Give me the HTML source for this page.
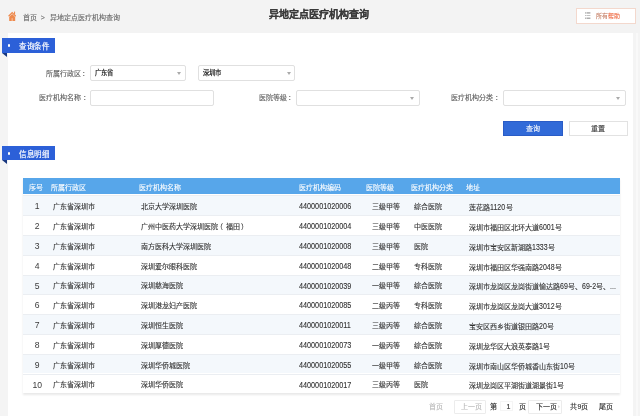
<!DOCTYPE html>
<html lang="zh-CN"><head><meta charset="utf-8">
<style>
*{margin:0;padding:0;box-sizing:border-box}
html,body{width:640px;height:416px;overflow:hidden;background:#f4f4f4;font-family:"Liberation Sans",sans-serif;color:#333;-webkit-text-stroke-width:0.1px}
.a{position:absolute;white-space:nowrap;line-height:1}
#hdr{position:absolute;left:0;top:0;width:640px;height:33px;background:#f3f3f3}
#panel{position:absolute;left:7.5px;top:33px;width:625.5px;height:383px;background:#fff}
.tab{position:absolute;left:2.3px;width:52.5px;height:14.5px;background:#2c60d8;color:#fff;font-size:15px}
.tab .dot{position:absolute;left:5.3px;top:6.3px;width:2.7px;height:2.7px;border-radius:50%;background:#fff}
.tab .t{position:absolute;left:16.9px;top:3.9px;-webkit-text-stroke-width:0.35px;line-height:1;white-space:nowrap;transform:scale(0.5);transform-origin:0 0}
.fold{position:absolute;left:2.3px;width:0;height:0;border-top:4.8px solid #17377f;border-left:5.2px solid transparent}
.lbl{position:absolute;font-size:7px;color:#5a5a5a;line-height:1}
.col{position:relative;left:1.9px}
.inp{position:absolute;height:15.5px;border:1px solid #e0e0e0;border-radius:2px;background:#fff}
.arr{position:absolute;width:0;height:0;border-top:3px solid #aaa;border-left:2px solid transparent;border-right:2px solid transparent}
.btn{position:absolute;height:15px;font-size:7px;text-align:center;line-height:15px}
#tbl{position:absolute;left:22.8px;top:178px;width:597.2px;height:215.3px;background:#fff;box-shadow:0 1.5px 2px rgba(0,0,0,0.09),-0.5px 0 0.5px rgba(0,0,0,0.06)}
.th{position:absolute;left:0;top:0;width:597.2px;height:16.4px;background:#57a6ea}
.tr{position:absolute;left:0;width:597.2px;height:19.8px;border-top:0.6px solid #ebeef2}
.tr.o{background:#f4f8fc}
.c{position:absolute;font-size:7px;line-height:1;white-space:nowrap}
.th .c{color:#fff;top:5.5px}
.tr .c{color:#333;top:6.9px;-webkit-text-stroke-width:0.12px}
.tr .c.d{top:6.2px}
.dgc{display:inline-block;font-size:9px;transform:scaleX(0.805);transform-origin:0 0}
.tr .c.n{left:0.6px;width:27.6px;text-align:center;font-size:8.6px;top:6px;-webkit-text-stroke-width:0;color:#3a3a3a}
.dg{display:inline-block;line-height:1}
.dgi{display:inline-block;font-size:9px;transform:scaleX(0.78);transform-origin:0 0}
.pg{position:absolute;font-size:7px;line-height:1;white-space:nowrap;color:#333;-webkit-text-stroke-width:0.15px}
</style></head><body><div id="wrap" style="position:absolute;left:0;top:0;width:640px;height:416px;will-change:transform">
<div id="hdr"></div>
<!-- home icon -->
<svg class="a" style="left:8px;top:10.8px" width="8.4" height="10.2" viewBox="0 0 8.4 10.2">
<rect x="6" y="0.6" width="1.1" height="2.6" fill="#ee8a4e"/>
<path d="M0.6 5.2 L4.2 1.6 L7.8 5.2" fill="none" stroke="#ee8a4e" stroke-width="1.3"/>
<path d="M1.2 6 L4.2 3.1 L7.2 6 L7.2 10 L1.2 10 Z" fill="#ee8a4e"/>
<rect x="3.5" y="7.2" width="1.4" height="2.8" fill="#f7b58c"/>
</svg>
<div class="a" style="left:22.5px;top:14px;font-size:7px;color:#666">首页</div>
<div class="a" style="left:40.8px;top:14px;font-size:7px;color:#666">&gt;</div>
<div class="a" style="left:49.5px;top:14px;font-size:7px;color:#666">异地定点医疗机构查询</div>
<div class="a" style="left:269px;top:10px;font-size:10px;font-weight:bold;color:#3a3a3a">异地定点医疗机构查询</div>
<!-- help button -->
<div class="a" style="left:576px;top:8px;width:60px;height:15.5px;border:0.7px solid #f3d8cd;background:#fff"></div>
<svg class="a" style="left:584.8px;top:12.4px" width="6.5" height="7" viewBox="0 0 6.5 7">
<rect x="0.3" y="0.5" width="1" height="0.9" fill="#555"/><rect x="1.8" y="0.5" width="3.6" height="0.9" fill="#777"/>
<rect x="0.3" y="3.1" width="1" height="0.9" fill="#999"/><rect x="1.8" y="3.1" width="3.6" height="0.9" fill="#bbb"/>
<rect x="0.3" y="5.7" width="1" height="0.9" fill="#555"/><rect x="1.8" y="5.7" width="3.6" height="0.9" fill="#777"/>
</svg>
<div class="a" style="left:596.3px;top:12.9px;font-size:6px;color:#c8866e">所有<span style="color:#ee6e48">帮助</span></div>

<div id="panel"></div>
<div class="a" style="left:636px;top:33px;width:1.5px;height:383px;background:#f9f9f9"></div>

<!-- query conditions -->
<div class="tab" style="top:38.1px"><div class="dot"></div><div class="t">查询条件</div></div>
<div class="fold" style="top:52.6px"></div>

<div class="lbl" style="left:45.6px;top:70px">所属行政区<span class="col">：</span></div>
<div class="inp" style="left:90.2px;top:65px;width:95.8px"></div>
<div class="a" style="left:94.5px;top:70px;font-size:6.3px;color:#222;-webkit-text-stroke-width:0.2px">广东省</div>
<div class="arr" style="left:176.8px;top:72.2px"></div>
<div class="inp" style="left:198px;top:65px;width:97.4px"></div>
<div class="a" style="left:203px;top:70px;font-size:6.3px;color:#222;-webkit-text-stroke-width:0.2px">深圳市</div>
<div class="arr" style="left:286.6px;top:72.2px"></div>

<div class="lbl" style="left:38.7px;top:94px">医疗机构名称<span class="col">：</span></div>
<div class="inp" style="left:90.2px;top:90.3px;width:123.6px"></div>
<div class="lbl" style="left:258.6px;top:94px">医院等级<span class="col">：</span></div>
<div class="inp" style="left:296px;top:90.3px;width:123.8px"></div>
<div class="arr" style="left:410.2px;top:97px"></div>
<div class="lbl" style="left:451.3px;top:94px">医疗机构分类<span class="col">：</span></div>
<div class="inp" style="left:503px;top:90.3px;width:122.7px"></div>
<div class="arr" style="left:616.2px;top:97px"></div>

<div class="btn" style="left:503.4px;top:120.6px;width:59.2px;background:#316ad8;border:0.6px solid #2a5cc6;line-height:13.8px;color:#fff">查询</div>
<div class="btn" style="left:568.5px;top:120.6px;width:59.3px;border:0.8px solid #e2e2e2;color:#444;background:#fff;line-height:13.4px">重置</div>

<!-- info -->
<div class="tab" style="top:145.8px"><div class="dot"></div><div class="t">信息明细</div></div>
<div class="fold" style="top:160.1px"></div>

<div id="tbl">
<div class="th">
<div class="c" style="left:6px">序号</div>
<div class="c" style="left:28.3px">所属行政区</div>
<div class="c" style="left:116.5px">医疗机构名称</div>
<div class="c" style="left:275.8px">医疗机构编码</div>
<div class="c" style="left:343px">医院等级</div>
<div class="c" style="left:388px">医疗机构分类</div>
<div class="c" style="left:443px">地址</div>
</div>
<div class="tr o" style="top:17.30px"><div class="c n">1</div><div class="c" style="left:30px">广东省深圳市</div><div class="c" style="left:118.3px">北京大学深圳医院</div><div class="c d" style="left:275.8px"><span class="dgc">4400001020006</span></div><div class="c" style="left:349.2px">三级甲等</div><div class="c" style="left:391.4px">综合医院</div><div class="c" style="left:446.7px">莲花路<span class="dg" style="width:15.4px"><span class="dgi">1120</span></span>号</div></div>
<div class="tr" style="top:37.10px"><div class="c n">2</div><div class="c" style="left:30px">广东省深圳市</div><div class="c" style="left:118.3px">广州中医药大学深圳医院<span style="position:relative;left:-2px">（</span><span style="position:relative;left:0.6px">福田</span><span style="position:relative;left:1.6px">）</span></div><div class="c d" style="left:275.8px"><span class="dgc">4400001020004</span></div><div class="c" style="left:349.2px">三级甲等</div><div class="c" style="left:391.4px">中医医院</div><div class="c" style="left:446.7px">深圳市福田区北环大道<span class="dg" style="width:15.4px"><span class="dgi">6001</span></span>号</div></div>
<div class="tr o" style="top:56.90px"><div class="c n">3</div><div class="c" style="left:30px">广东省深圳市</div><div class="c" style="left:118.3px">南方医科大学深圳医院</div><div class="c d" style="left:275.8px"><span class="dgc">4400001020008</span></div><div class="c" style="left:349.2px">三级甲等</div><div class="c" style="left:391.4px">医院</div><div class="c" style="left:446.7px">深圳市宝安区新湖路<span class="dg" style="width:15.4px"><span class="dgi">1333</span></span>号</div></div>
<div class="tr" style="top:76.70px"><div class="c n">4</div><div class="c" style="left:30px">广东省深圳市</div><div class="c" style="left:118.3px">深圳爱尔眼科医院</div><div class="c d" style="left:275.8px"><span class="dgc">4400001020048</span></div><div class="c" style="left:349.2px">二级甲等</div><div class="c" style="left:391.4px">专科医院</div><div class="c" style="left:446.7px">深圳市福田区华强南路<span class="dg" style="width:15.4px"><span class="dgi">2048</span></span>号</div></div>
<div class="tr o" style="top:96.50px"><div class="c n">5</div><div class="c" style="left:30px">广东省深圳市</div><div class="c" style="left:118.3px">深圳慈海医院</div><div class="c d" style="left:275.8px"><span class="dgc">4400001020039</span></div><div class="c" style="left:349.2px">一级甲等</div><div class="c" style="left:391.4px">综合医院</div><div class="c" style="left:446.7px">深圳市龙岗区龙岗街道愉达路<span class="dg" style="width:7.7px"><span class="dgi">69</span></span>号、<span class="dg" style="width:13.9px"><span class="dgi">69-2</span></span>号、...</div></div>
<div class="tr" style="top:116.30px"><div class="c n">6</div><div class="c" style="left:30px">广东省深圳市</div><div class="c" style="left:118.3px">深圳港龙妇产医院</div><div class="c d" style="left:275.8px"><span class="dgc">4400001020085</span></div><div class="c" style="left:349.2px">二级丙等</div><div class="c" style="left:391.4px">专科医院</div><div class="c" style="left:446.7px">深圳市龙岗区龙岗大道<span class="dg" style="width:15.4px"><span class="dgi">3012</span></span>号</div></div>
<div class="tr o" style="top:136.10px"><div class="c n">7</div><div class="c" style="left:30px">广东省深圳市</div><div class="c" style="left:118.3px">深圳恒生医院</div><div class="c d" style="left:275.8px"><span class="dgc">4400001020011</span></div><div class="c" style="left:349.2px">三级丙等</div><div class="c" style="left:391.4px">综合医院</div><div class="c" style="left:446.7px">宝安区西乡街道银田路<span class="dg" style="width:7.7px"><span class="dgi">20</span></span>号</div></div>
<div class="tr" style="top:155.90px"><div class="c n">8</div><div class="c" style="left:30px">广东省深圳市</div><div class="c" style="left:118.3px">深圳厚德医院</div><div class="c d" style="left:275.8px"><span class="dgc">4400001020073</span></div><div class="c" style="left:349.2px">一级丙等</div><div class="c" style="left:391.4px">综合医院</div><div class="c" style="left:446.7px">深圳龙华区大浪英泰路<span class="dg" style="width:3.9px"><span class="dgi">1</span></span>号</div></div>
<div class="tr o" style="top:175.70px"><div class="c n">9</div><div class="c" style="left:30px">广东省深圳市</div><div class="c" style="left:118.3px">深圳华侨城医院</div><div class="c d" style="left:275.8px"><span class="dgc">4400001020055</span></div><div class="c" style="left:349.2px">一级甲等</div><div class="c" style="left:391.4px">综合医院</div><div class="c" style="left:446.7px">深圳市南山区华侨城香山东街<span class="dg" style="width:7.7px"><span class="dgi">10</span></span>号</div></div>
<div class="tr" style="top:195.50px"><div class="c n">10</div><div class="c" style="left:30px">广东省深圳市</div><div class="c" style="left:118.3px">深圳华侨医院</div><div class="c d" style="left:275.8px"><span class="dgc">4400001020017</span></div><div class="c" style="left:349.2px">三级丙等</div><div class="c" style="left:391.4px">医院</div><div class="c" style="left:446.7px">深圳龙岗区平湖街道湖景街<span class="dg" style="width:3.9px"><span class="dgi">1</span></span>号</div></div>

</div>
<div class="pg" style="left:429.2px;top:402.8px;color:#bbb">首页</div>
<div class="a" style="left:453.5px;top:400.3px;width:32.7px;height:14px;border:0.7px solid #ececec;border-radius:1px"></div>
<div class="pg" style="left:461px;top:402.8px;color:#bbb">上一页</div>
<div class="pg" style="left:490.2px;top:402.8px">第</div>
<div class="a" style="left:499.5px;top:400.6px;width:13.6px;height:10.5px;border:0.6px solid #f5f5f5"></div>
<div class="pg" style="left:506.5px;top:402.8px">1</div>
<div class="pg" style="left:518.6px;top:402.8px">页</div>
<div class="a" style="left:528px;top:399.8px;width:34px;height:14.5px;border:0.7px solid #ececec;border-radius:1px"></div>
<div class="pg" style="left:535.8px;top:402.8px">下一页</div>
<div class="pg" style="left:557.8px;top:402.8px;color:#ccc;font-size:6px">›</div>
<div class="pg" style="left:570.4px;top:402.8px">共9页</div>
<div class="pg" style="left:598.5px;top:402.8px">尾页</div>
</div></body></html>
